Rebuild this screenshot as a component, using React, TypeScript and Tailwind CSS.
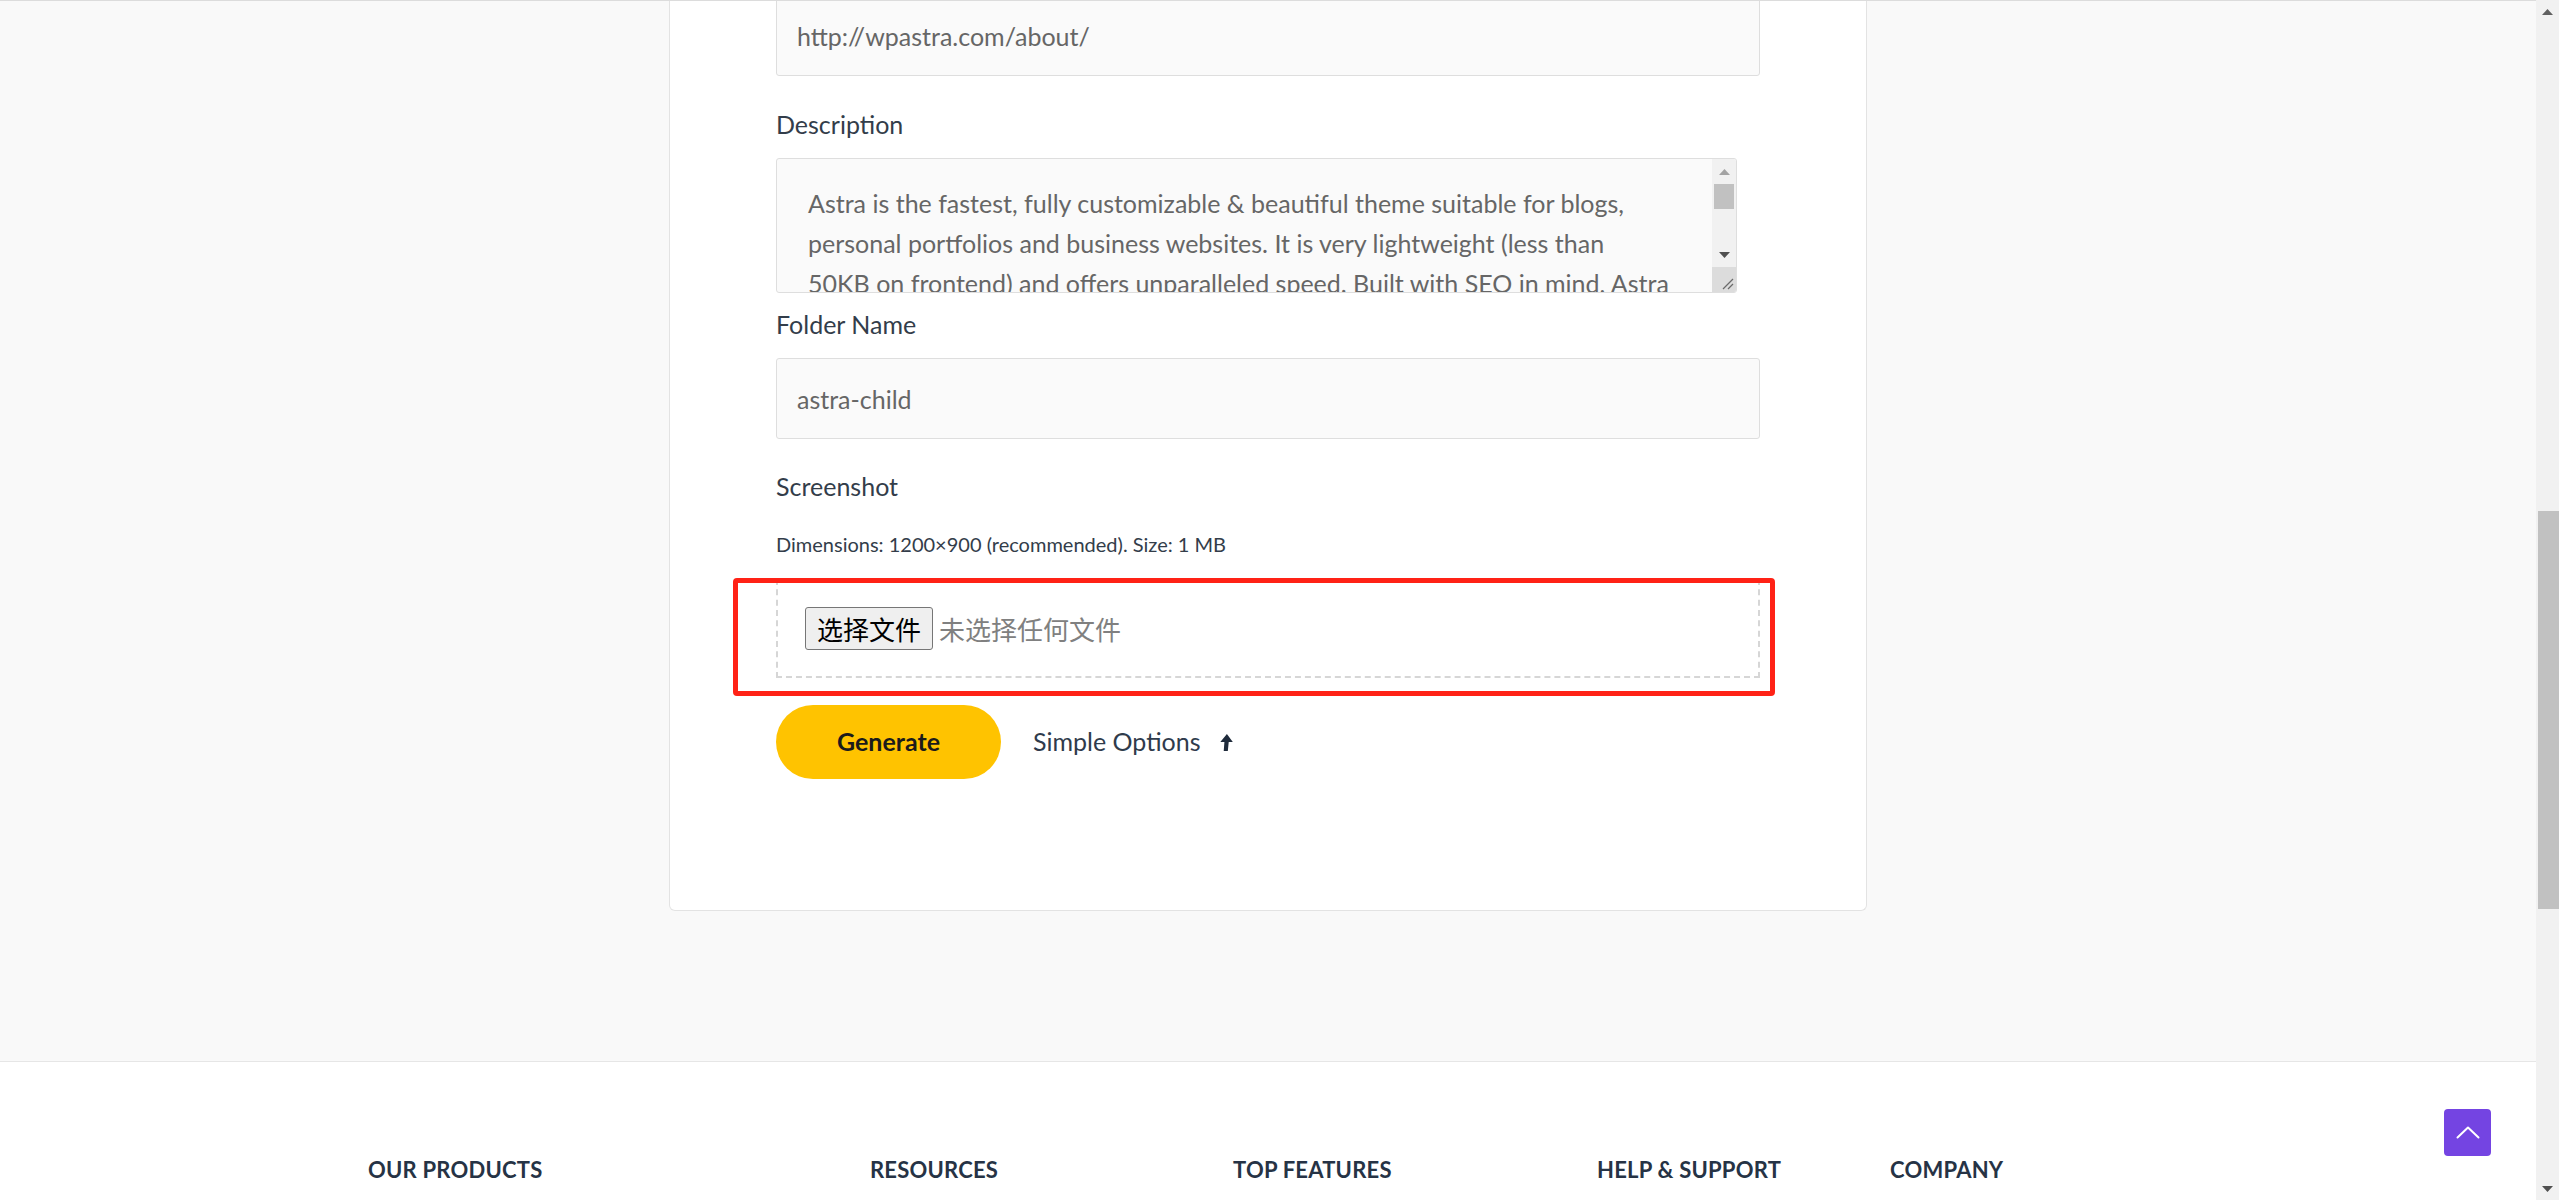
import React from 'react';

const description =
  'Astra is the fastest, fully customizable & beautiful theme suitable for blogs,\n' +
  'personal portfolios and business websites. It is very lightweight (less than\n' +
  '50KB on frontend) and offers unparalleled speed. Built with SEO in mind, Astra\n' +
  'comes with Schema.org code integrated and is Native AMP ready so search engines will love your site.';

const footerCols = [
  { title: 'OUR PRODUCTS', width: 'w-[502px]' },
  { title: 'RESOURCES', width: 'w-[363px]' },
  { title: 'TOP FEATURES', width: 'w-[364px]' },
  { title: 'HELP & SUPPORT', width: 'w-[293px]' },
  { title: 'COMPANY', width: 'w-[300px]' },
];

const Label: React.FC<{ text: string; className?: string }> = ({ text, className }) => (
  <label className={`block text-[25px] leading-[30px] text-[#333d4a] ${className ?? ''}`}>{text}</label>
);

const TextInput: React.FC<{ value: string }> = ({ value }) => (
  <input
    readOnly
    value={value}
    className="block h-[81px] w-full rounded-[3px] border border-[#dedede] bg-[#fafafa] px-[20px] text-[25px] text-[#666666] outline-none"
  />
);

const UpTriangle: React.FC<{ color: string }> = ({ color }) => (
  <svg width="11" height="6" viewBox="0 0 11 6">
    <polygon points="5.5,0 11,6 0,6" fill={color} />
  </svg>
);

const DownTriangle: React.FC<{ color: string }> = ({ color }) => (
  <svg width="11" height="6" viewBox="0 0 11 6">
    <polygon points="0,0 11,0 5.5,6" fill={color} />
  </svg>
);

const DescriptionBox: React.FC = () => (
  <div className="flex h-[135px] w-[961px] overflow-hidden rounded-[3px] border border-[#dedede] bg-[#fafafa]">
    <textarea
      readOnly
      value={description}
      className="h-full flex-1 resize-none overflow-hidden bg-transparent pl-[31px] pr-[4px] pt-[24px] text-[25px] leading-[40px] text-[#666666] outline-none whitespace-pre-wrap"
    />
    <div className="flex w-[24px] flex-col bg-[#f1f1f1]">
      <div className="flex h-[25px] items-center justify-center">
        <UpTriangle color="#a3a3a3" />
      </div>
      <div className="mx-[2px] h-[25px] bg-[#c1c1c1]" />
      <div className="flex-1" />
      <div className="flex h-[25px] items-center justify-center">
        <DownTriangle color="#505050" />
      </div>
      <div className="flex h-[25px] items-end justify-end bg-[#dcdcdc] p-[2px]">
        <svg width="14" height="14" viewBox="0 0 14 14">
          <line x1="13" y1="3" x2="3" y2="13" stroke="#6a6a6a" strokeWidth="1.2" />
          <line x1="13" y1="8" x2="8" y2="13" stroke="#6a6a6a" strokeWidth="1.2" />
        </svg>
      </div>
    </div>
  </div>
);

export default function App() {
  return (
    <div className="flex h-[1200px] w-full overflow-hidden bg-white font-['Lato',sans-serif]">
      <div className="relative flex flex-1 flex-col">
        <div className="flex h-[1062px] flex-col items-center overflow-hidden border-t border-b border-t-[#dcdcdc] border-b-[#e6e6e6] bg-[#f9f9f9]">
          <div className="-mt-[6px] w-[1198px] rounded-b-[6px] border border-t-0 border-[#e3e3e3] bg-white px-[106px] pb-[131px]">
            <TextInput value="http://wpastra.com/about/" />

            <Label text="Description" className="mt-[33px] mb-[19px]" />
            <DescriptionBox />

            <Label text="Folder Name" className="mt-[16px] mb-[19px]" />
            <TextInput value="astra-child" />

            <Label text="Screenshot" className="mt-[32px]" />
            <p className="mt-[31px] text-[20px] leading-[25px] text-[#333d4a]">
              Dimensions: 1200×900 (recommended). Size: 1 MB
            </p>

            <div className="relative mt-[22px] flex h-[99px] items-center border-2 border-dashed border-[#d6d6d6] pl-[27px]">
              <button
                type="button"
                className="h-[43px] rounded-[3px] border border-[#767676] bg-[#efefef] px-[11px] font-['Noto_Sans_CJK_SC',sans-serif] text-[26px] leading-none text-black"
              >
                选择文件
              </button>
              <span className="ml-[6px] font-['Noto_Sans_CJK_SC',sans-serif] text-[26px] leading-none text-[#808080]">
                未选择任何文件
              </span>
              <div className="pointer-events-none absolute -bottom-[20px] -left-[45px] -right-[17px] -top-[3px] rounded-[4px] border-[5px] border-[#ff2216]" />
            </div>

            <div className="mt-[27px] flex items-center">
              <button
                type="button"
                className="h-[74px] w-[225px] rounded-full bg-[#ffc300] text-[25px] font-bold text-[#1b1b1b]"
              >
                Generate
              </button>
              <span className="ml-[32px] text-[25px] text-[#2f3b4c]">Simple Options</span>
              <svg className="ml-[18px]" width="14" height="17" viewBox="0 0 12 15">
                <polygon points="6.8,0 12,7 8.4,7 7.6,15 4,15 4.6,7 1,7" fill="#1f2b3b" />
              </svg>
            </div>
          </div>
        </div>

        <footer className="flex flex-1 bg-white pl-[368px] pt-[95px]">
          {footerCols.map((col) => (
            <div key={col.title} className={col.width}>
              <h4 className="text-[22px] font-bold leading-[26px] tracking-[0.01em] text-[#263345]">{col.title}</h4>
            </div>
          ))}
        </footer>

        <button
          type="button"
          className="absolute bottom-[44px] right-[45px] flex h-[47px] w-[47px] items-center justify-center rounded-[4px] bg-[#7444e2]"
        >
          <svg width="24" height="13" viewBox="0 0 24 13" fill="none">
            <polyline points="1.5,11.5 12,1.5 22.5,11.5" stroke="white" strokeWidth="2" strokeLinecap="round" strokeLinejoin="round" />
          </svg>
        </button>
      </div>

      <div className="flex w-[23px] flex-col bg-[#f1f1f1]">
        <div className="flex h-[23px] items-center justify-center">
          <UpTriangle color="#606060" />
        </div>
        <div className="h-[488px]" />
        <div className="ml-[2px] h-[398px] bg-[#c1c1c1]" />
        <div className="flex-1" />
        <div className="flex h-[23px] items-center justify-center">
          <DownTriangle color="#505050" />
        </div>
      </div>
    </div>
  );
}
